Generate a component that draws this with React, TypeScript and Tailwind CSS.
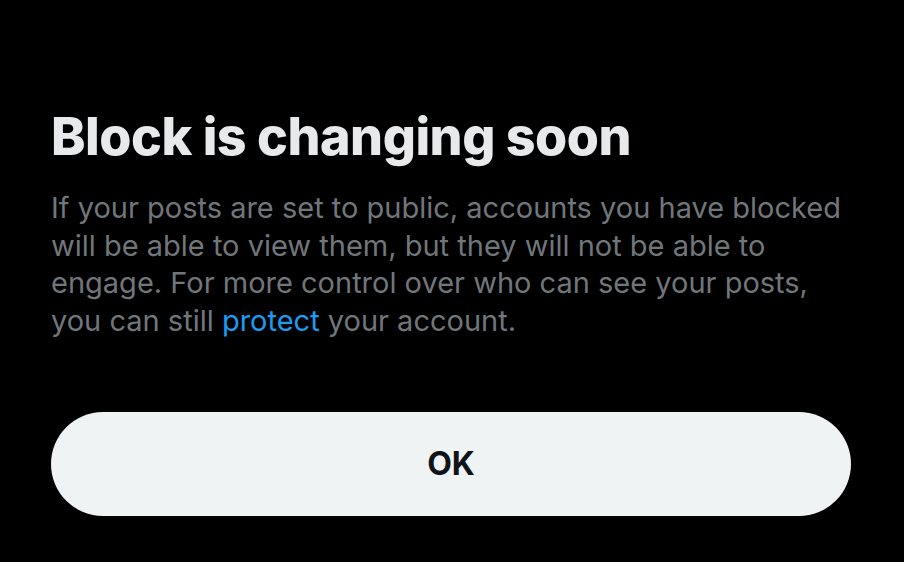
export default function App() {
  return (
    <div
      className="flex h-[562px] w-[904px] flex-col bg-black pl-[51px] pr-[53px] pt-[105px]"
      style={{ fontFamily: 'Inter, "Noto Sans", sans-serif' }}
    >
      <h1 className="text-[52px] font-extrabold leading-[64px] tracking-[-0.5px] text-[#e7e9ea]">
        Block is changing soon
      </h1>
      <p className="mt-[20px] text-[29px] leading-[37.5px] text-[#71767b]">
        If your posts are set to public, accounts you have blocked will be able to view them, but they
        will not be able to engage. For more control over who can see your posts, you can still{' '}
        <a className="text-[#1d9bf0]">protect</a> your account.
      </p>
      <button className="mt-[73px] flex h-[104px] w-full items-center justify-center rounded-full bg-[#eff3f4] text-[32px] font-bold text-[#0f1419]">
        OK
      </button>
    </div>
  );
}
